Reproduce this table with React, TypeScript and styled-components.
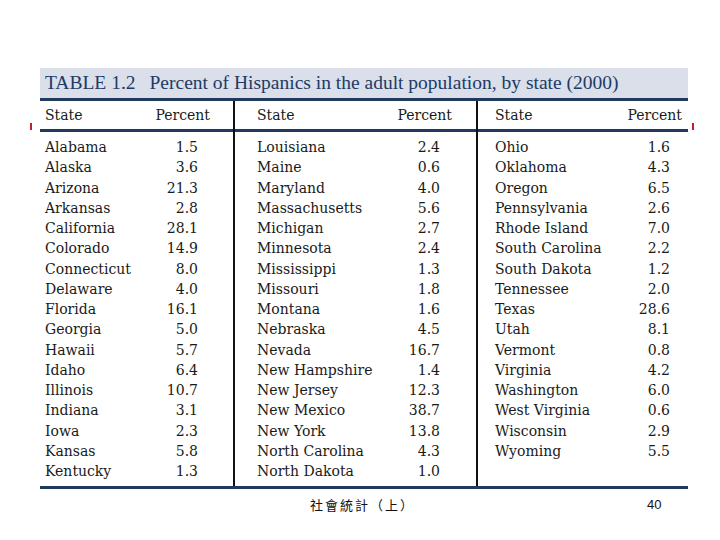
import React from "react";
import styled, { createGlobalStyle } from "styled-components";

const Global = createGlobalStyle`
  html, body { margin: 0; padding: 0; background: #ffffff; }
  body { width: 720px; height: 540px; overflow: hidden; }
`;

const Page = styled.div`
  width: 720px;
  height: 540px;
  box-sizing: border-box;
  padding: 68px 32px 0 40px;
  display: flex;
  flex-direction: column;
  font-family: "DejaVu Serif", "Liberation Serif", serif;
`;

const TableWrap = styled.div`
  position: relative;
  width: 648px;
`;

const TitleBar = styled.div`
  height: 30px;
  background: #dadfea;
  border-bottom: 3px solid #1f3a5c;
  display: flex;
  align-items: center;
  padding-left: 5px;
  gap: 14px;
  color: #203a66;
  font-family: "Liberation Serif", "DejaVu Serif", serif;
  font-size: 19.5px;
  white-space: nowrap;
`;

const Groups = styled.div`
  display: grid;
  grid-template-columns: 193px 243px 212px;
  border-bottom: 3px solid #1f3a5c;
`;

const Group = styled.div<{ $first?: boolean; $left: number; $right: number }>`
  display: flex;
  flex-direction: column;
  border-left: ${(p) => (p.$first ? "none" : "2px solid #111")};
  --left: ${(p) => p.$left}px;
  --right: ${(p) => p.$right}px;
`;

const HeadRow = styled.div`
  height: 28px;
  display: flex;
  align-items: center;
  justify-content: space-between;
  padding: 0 var(--right) 0 var(--left);
  border-bottom: 3px solid #1f3a5c;
  font-size: 14px;
  color: #1a1a1a;
`;

const Body = styled.div`
  display: flex;
  flex-direction: column;
  padding: 5px 0 5px;
`;

const Row = styled.div`
  height: 20.25px;
  display: flex;
  align-items: center;
  justify-content: space-between;
  padding: 0 calc(var(--right) + 12px) 0 var(--left);
  font-size: 14px;
  color: #1a1a1a;
  white-space: nowrap;
`;

const Tick = styled.span<{ $side: "left" | "right" }>`
  position: absolute;
  top: 55px;
  ${(p) => (p.$side === "left" ? "left: -10px;" : "right: -6px;")}
  width: 2px;
  height: 7px;
  background: #c0202a;
`;

const Footer = styled.div`
  display: flex;
  align-items: center;
  height: 30px;
`;

const FooterTitle = styled.span`
  margin-left: 270px;
  font-family: "Noto Sans CJK TC", "Noto Sans CJK SC", sans-serif;
  font-size: 13px;
  color: #111;
  letter-spacing: 2px;
`;

const PageNum = styled.span`
  margin-left: 232px;
  font-family: "Liberation Sans", Arial, sans-serif;
  font-size: 13px;
  color: #111;
`;

type Entry = [string, string];

const col1: Entry[] = [
  ["Alabama", "1.5"], ["Alaska", "3.6"], ["Arizona", "21.3"], ["Arkansas", "2.8"],
  ["California", "28.1"], ["Colorado", "14.9"], ["Connecticut", "8.0"], ["Delaware", "4.0"],
  ["Florida", "16.1"], ["Georgia", "5.0"], ["Hawaii", "5.7"], ["Idaho", "6.4"],
  ["Illinois", "10.7"], ["Indiana", "3.1"], ["Iowa", "2.3"], ["Kansas", "5.8"],
  ["Kentucky", "1.3"],
];
const col2: Entry[] = [
  ["Louisiana", "2.4"], ["Maine", "0.6"], ["Maryland", "4.0"], ["Massachusetts", "5.6"],
  ["Michigan", "2.7"], ["Minnesota", "2.4"], ["Mississippi", "1.3"], ["Missouri", "1.8"],
  ["Montana", "1.6"], ["Nebraska", "4.5"], ["Nevada", "16.7"], ["New Hampshire", "1.4"],
  ["New Jersey", "12.3"], ["New Mexico", "38.7"], ["New York", "13.8"], ["North Carolina", "4.3"],
  ["North Dakota", "1.0"],
];
const col3: Entry[] = [
  ["Ohio", "1.6"], ["Oklahoma", "4.3"], ["Oregon", "6.5"], ["Pennsylvania", "2.6"],
  ["Rhode Island", "7.0"], ["South Carolina", "2.2"], ["South Dakota", "1.2"], ["Tennessee", "2.0"],
  ["Texas", "28.6"], ["Utah", "8.1"], ["Vermont", "0.8"], ["Virginia", "4.2"],
  ["Washington", "6.0"], ["West Virginia", "0.6"], ["Wisconsin", "2.9"], ["Wyoming", "5.5"],
];

const groups = [
  { data: col1, left: 5, right: 23, first: true },
  { data: col2, left: 22, right: 24, first: false },
  { data: col3, left: 17, right: 6, first: false },
];

export default function App() {
  return (
    <>
      <Global />
      <Page>
        <TableWrap>
          <TitleBar>
            <span>TABLE 1.2</span>
            <span>Percent of Hispanics in the adult population, by state (2000)</span>
          </TitleBar>
          <Groups>
            {groups.map((g, i) => (
              <Group key={i} $first={g.first} $left={g.left} $right={g.right}>
                <HeadRow>
                  <span>State</span>
                  <span>Percent</span>
                </HeadRow>
                <Body>
                  {g.data.map(([name, val]) => (
                    <Row key={name}>
                      <span>{name}</span>
                      <span>{val}</span>
                    </Row>
                  ))}
                </Body>
              </Group>
            ))}
          </Groups>
          <Tick $side="left" />
          <Tick $side="right" />
        </TableWrap>
        <Footer>
          <FooterTitle>社會統計（上）</FooterTitle>
          <PageNum>40</PageNum>
        </Footer>
      </Page>
    </>
  );
}
